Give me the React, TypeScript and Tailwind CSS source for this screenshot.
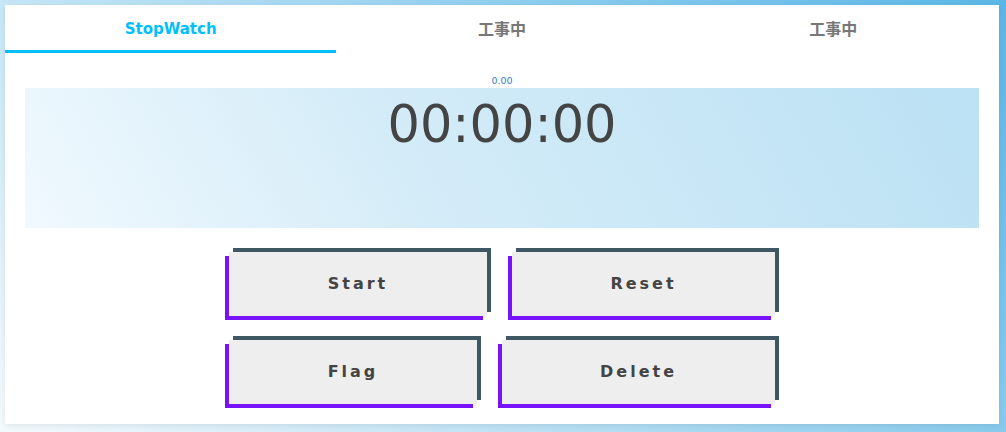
import React from "react";

const tabs = [
  { label: "StopWatch", active: true },
  { label: "工事中", active: false },
  { label: "工事中", active: false },
];

function Btn({ label, w }: { label: string; w: string }) {
  return (
    <button
      className={`${w} h-[64px] bg-[#eeeeee] shadow-[4px_-4px_0_#3f5663,-4px_4px_0_#7613fa] text-[16px] font-bold tracking-[3px] text-[#444444] flex items-center justify-center`}
      style={{ fontFamily: '"DejaVu Sans", Verdana, sans-serif' }}
    >
      <span>{label}</span>
    </button>
  );
}

export default function App() {
  return (
    <div className="w-[1006px] h-[432px] p-[5px] bg-[linear-gradient(45deg,#f4fafd_0%,#5ab6e5_100%)] overflow-hidden">
      <div className="w-[994px] h-[419px] bg-white shadow-[0_2px_6px_rgba(0,0,0,0.08)] flex flex-col">
        <div
          className="flex h-[48px]"
          style={{ fontFamily: '"DejaVu Sans", "Noto Sans CJK JP", sans-serif' }}
        >
          {tabs.map((t, i) => (
            <div
              key={i}
              className={`flex-1 flex items-center justify-center border-b-[3px] pt-[4px] font-bold ${
                t.active
                  ? "border-[#00bfff] text-[#00bfff] text-[15px]"
                  : "border-transparent text-[#777777] text-[16px]"
              }`}
            >
              {t.label}
            </div>
          ))}
        </div>
        <div
          className="pt-[20px] leading-[15px] text-[9.5px] text-center text-[#2f7fc0]"
          style={{ fontFamily: '"DejaVu Sans", sans-serif' }}
        >
          0.00
        </div>
        <div className="mx-[20px] h-[140px] bg-[linear-gradient(60deg,#f0f9fe_0%,#d4ecf8_40%,#bbe1f4_100%)] pt-[7px]">
          <div
            className="text-center text-[51px] leading-[60px] text-[#444444]"
            style={{ fontFamily: '"DejaVu Sans", sans-serif' }}
          >
            00:00:00
          </div>
        </div>
        <div className="mt-[24px] flex flex-col items-center gap-[24px]">
          <div className="flex gap-[25px]">
            <Btn label="Start" w="w-[258px]" />
            <Btn label="Reset" w="w-[263px]" />
          </div>
          <div className="flex gap-[25px]">
            <Btn label="Flag" w="w-[248px]" />
            <Btn label="Delete" w="w-[273px]" />
          </div>
        </div>
      </div>
    </div>
  );
}
